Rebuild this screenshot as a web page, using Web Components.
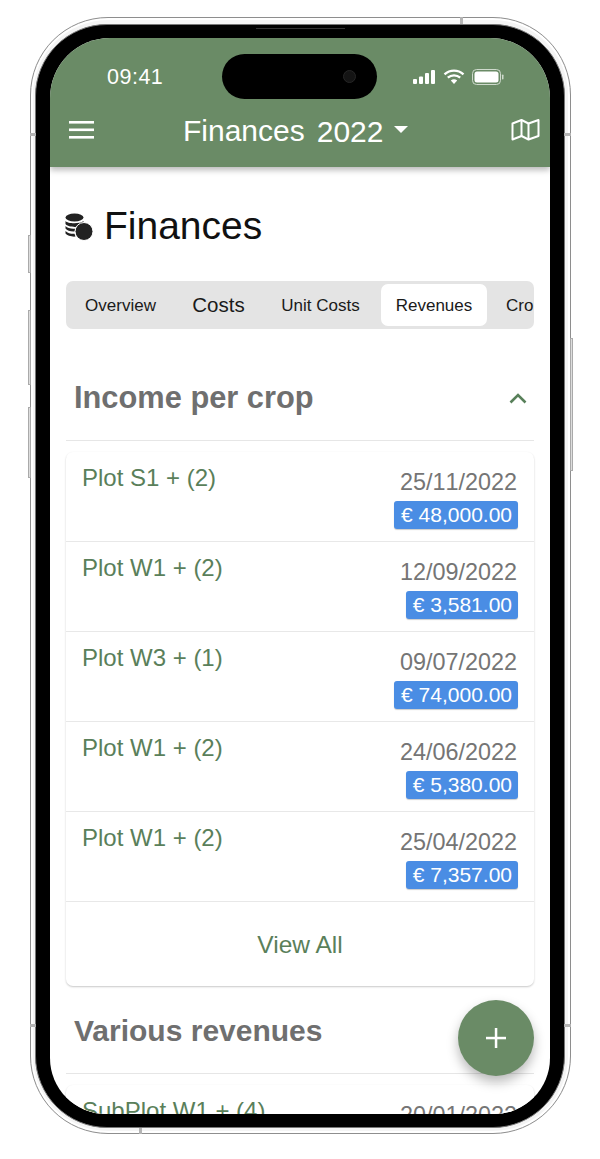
<!doctype html>
<html>
<head>
<meta charset="utf-8">
<style>
  html, body { margin: 0; padding: 0; background: #fff; }
  body { width: 600px; height: 1159px; overflow: hidden; font-family: "Liberation Sans", Arial, sans-serif; }
</style>
</head>
<body>

<template id="phone-frame">
  <style>
    :host { display: block; width: 541px; height: 1117px; margin: 17px 0 0 30px; position: relative; }
    .metal {
      box-sizing: border-box; width: 100%; height: 100%;
      border: 1px solid #8e8e8e; border-radius: 78px;
      background: #f4f4f4; padding: 6px 5px 5px 4px;
      box-shadow: inset 0 0 0 2px #fff;
    }
    .bezel {
      box-sizing: border-box; width: 100%; height: 100%;
      border: 1px solid #777; border-radius: 72px; background: #000;
      padding: 13px 14px 13px 14px;
    }
    .screen {
      height: 100%; background: #fff; border-radius: 60px 60px 56px 56px; overflow: hidden; position: relative;
      display: flex; flex-direction: column;
    }
    .btn { position: absolute; background: #ddd; border: 1px solid #aaa; box-sizing: border-box; width: 3px; }
    .band { position: absolute; background: #b4b4b4; }
    .island { position: absolute; left: 172px; top: 16px; width: 155px; height: 45px; border-radius: 23px; background: #000; z-index: 5; }
    .cam { position: absolute; right: 21px; top: 16px; width: 13px; height: 13px; border-radius: 50%; background: #141414; border: 1px solid #262626; box-sizing: border-box; }
    .speaker { position: absolute; left: 226px; top: 11px; width: 89px; height: 1px; background: #333; z-index: 2; }
  </style>
  <div class="btn" style="left:-2px;top:218px;height:38px"></div>
  <div class="btn" style="left:-2px;top:293px;height:75px"></div>
  <div class="btn" style="left:-2px;top:390px;height:71px"></div>
  <div class="btn" style="right:-2px;top:321px;height:133px"></div>
  <div class="band" style="left:0;top:116px;width:6px;height:3px"></div>
  <div class="band" style="right:0;top:116px;width:7px;height:3px"></div>
  <div class="band" style="left:0;top:1007px;width:6px;height:3px"></div>
  <div class="band" style="right:0;top:1007px;width:7px;height:3px"></div>
  <div class="band" style="left:430px;top:0;width:3px;height:7px"></div>
  <div class="band" style="left:109px;bottom:0;width:3px;height:6px"></div>
  <div class="speaker"></div>
  <div class="metal"><div class="bezel"><div class="screen">
    <div class="island"><div class="cam"></div></div>
    <slot></slot>
  </div></div></div>
</template>

<template id="app-bar">
  <style>
    :host { display: block; flex: none; position: relative; background: #6a8b66; color: #fff; height: 129px; box-shadow: 0 3px 6px rgba(0,0,0,.28); z-index: 2; }
    .status { display: flex; justify-content: space-between; align-items: center; height: 24px; padding: 27px 46px 0 57px; }
    .time { font-size: 21.500px; letter-spacing: .5px; }
    .icons { display: flex; align-items: center; gap: 7px; }
    .bar { display: flex; align-items: center; padding: 22px 10px 0 18px; height: 40px; }
    .menu { margin-bottom: 3px; }
    .map { margin-bottom: 4px; }
    .title { flex: 1; display: flex; align-items: center; font-size: 30px; margin-left: 88px; }
    .title b { font-weight: 400; margin-left: 12px; padding-top: 2px; }
    .caret { width: 0; height: 0; border: 7px solid transparent; border-top: 7px solid #fff; border-bottom: 0; margin: -3px 0 0 11px; }
  </style>
  <div class="status">
    <span class="time">09:41</span>
    <span class="icons">
      <svg width="23" height="16" viewBox="0 0 23 16" fill="#fff"><rect x="0" y="10" width="4" height="5" rx="1"/><rect x="6" y="7.500" width="4" height="7.500" rx="1"/><rect x="12" y="4" width="4" height="11" rx="1"/><rect x="18" y="1" width="4" height="14" rx="1"/></svg>
      <svg width="22" height="16" viewBox="0 0 22 16"><path d="M1.500 5.400C7 .4 15 .4 20.500 5.400" fill="none" stroke="#fff" stroke-width="2.300"/><path d="M4.800 8.700C8.300 5.500 13.700 5.500 17.200 8.700" fill="none" stroke="#fff" stroke-width="2.300"/><path d="M7.800 11.600C9.800 9.900 12.200 9.900 14.200 11.600L11 15Z" fill="#fff"/></svg>
      <svg width="32" height="16" viewBox="0 0 32 16"><rect x=".5" y=".5" width="28" height="15" rx="4" fill="none" stroke="#cfdacd"/><rect x="2.500" y="2.500" width="24" height="11" rx="2.500" fill="#fff"/><rect x="30" y="5.500" width="1.500" height="5" rx=".7" fill="#cfdacd"/></svg>
    </span>
  </div>
  <div class="bar">
    <svg class="menu" width="27" height="18" viewBox="0 0 27 18" fill="#fff"><rect x="1" y="0" width="25" height="2.600"/><rect x="1" y="7.500" width="25" height="2.600"/><rect x="1" y="15" width="25" height="2.600"/></svg>
    <div class="title"><span>Finances</span><b>2022</b><i class="caret"></i></div>
    <svg class="map" width="29" height="23" viewBox="0 0 29 23" fill="none" stroke="#fff" stroke-width="2" stroke-linejoin="round"><path d="M1.500 5.500L10.500 2L17.500 5.500L27.500 2V18L17.500 21.500L10.500 18L1.500 21.500Z"/><path d="M10.500 2V18M17.500 5.500V21.500"/></svg>
  </div>
</template>

<template id="page-title">
  <style>
    :host { display: flex; flex: none; align-items: center; gap: 11px; margin: 39px 0 0 15px; height: 40px; color: #111; font-size: 39px; }
    svg { margin-top: 2px; }
  </style>
  <svg width="28" height="28" viewBox="0 0 28 28" fill="#222">
    <ellipse cx="9.500" cy="4.500" rx="9" ry="4"/>
    <path d="M.5 8c2 3 15 3 18 0v3c-1 1-3 2-5 2.500-3 .8-11 .5-13-2.500Z"/>
    <path d="M.5 13c2 2.600 7 3 10.500 2.500l-1.500 3c-4 .2-7.500-.8-9-3Z"/>
    <path d="M.5 18c2 2.400 6 3 9 2.800l1 2.800c-4 .3-8.500-.8-10-3Z"/>
    <circle cx="19" cy="18.500" r="9" stroke="#fff" stroke-width="1"/>
  </svg>
  <slot></slot>
</template>

<template id="tab-strip">
  <style>
    :host { display: flex; flex: none; margin: 35px 16px 0; height: 48px; background: #e4e4e4; border-radius: 7px; overflow: hidden; align-items: center; }
  </style>
  <slot></slot>
</template>

<template id="tab-item">
  <style>
    :host { display: flex; flex: none; box-sizing: border-box; align-items: center; justify-content: center; height: 42px; padding-top: 2px; border-radius: 7px; font-size: 17px; color: #1a1a1a; }
    :host([active]) { background: #fff; }
  </style>
  <slot></slot>
</template>

<template id="section-head">
  <style>
    :host { display: flex; flex: none; justify-content: space-between; align-items: center; margin: 0 16px; height: 84px; border-bottom: 1px solid #e6e6e6; color: #6f6f6f; font-weight: 700; font-size: 30.800px; padding-left: 8px; }
    svg { margin-right: 7px; }
  </style>
  <slot></slot>
  <svg width="18" height="12" viewBox="0 0 18 12" fill="none" stroke="var(--chev, #58805a)" stroke-width="2.600"><path d="M1.500 10.500L9 3L16.500 10.500"/></svg>
</template>

<template id="income-card">
  <style>
    :host { display: block; flex: none; margin: 11px 16px 0; border-radius: 7px; background: #fff; box-shadow: 0 1px 2px rgba(0,0,0,.22); overflow: hidden; }
  </style>
  <slot></slot>
</template>

<template id="income-row">
  <style>
    :host { display: flex; justify-content: space-between; box-sizing: border-box; height: 90px; padding: 12px 16px 0; border-bottom: 1px solid #e8e8e8; }
    .name { color: #5a7f5a; font-size: 24px; }
    .right { display: flex; flex-direction: column; align-items: flex-end; padding-top: 5px; }
    .date { color: #757575; line-height: 27px; font-size: 23.400px; font-kerning: none; margin-right: 1px; }
    .amount { background: #4a8de4; color: #fff; border-radius: 3px; height: 28px; line-height: 28px; padding: 0 6px 0 7px; margin-top: 5px; font-size: 21px; font-kerning: none; box-shadow: 0 1px 1px rgba(0,0,0,.2); }
  </style>
  <div class="name"><slot name="name"></slot></div>
  <div class="right">
    <div class="date"><slot name="date"></slot></div>
    <div class="amount"><slot name="amount"></slot></div>
  </div>
</template>

<template id="card-footer">
  <style>
    :host { display: flex; box-sizing: border-box; height: 84px; padding-top: 2px; align-items: center; justify-content: center; color: #5a7f5a; font-size: 24.500px; }
  </style>
  <slot></slot>
</template>

<template id="fab-button">
  <style>
    :host { position: absolute; right: 16px; bottom: 38px; width: 76px; height: 76px; border-radius: 50%; background: #6a8b66; display: flex; align-items: center; justify-content: center; box-shadow: 0 6px 12px rgba(0,0,0,.28); z-index: 3; }
  </style>
  <svg width="20" height="20" viewBox="0 0 20 20" fill="#fff"><rect x="8.800" y="0" width="2.500" height="20"/><rect x="0" y="8.800" width="20" height="2.500"/></svg>
</template>

<script>
function defineFromTemplate(name) {
  customElements.define(name, class extends HTMLElement {
    constructor() {
      super();
      let template = document.getElementById(name);
      this.attachShadow({mode: 'open'}).appendChild(document.importNode(template.content, true));
    }
  });
}
['phone-frame', 'app-bar', 'page-title', 'tab-strip', 'tab-item', 'section-head', 'income-card', 'income-row', 'card-footer', 'fab-button'].forEach(defineFromTemplate);
</script>

<phone-frame>
  <app-bar></app-bar>
  <page-title>Finances</page-title>
  <tab-strip>
    <tab-item style="width:109px">Overview</tab-item>
    <tab-item style="width:87px;font-size:20.500px;padding-top:0">Costs</tab-item>
    <tab-item style="width:117px">Unit Costs</tab-item>
    <tab-item active style="width:106px;margin-left:2px">Revenues</tab-item>
    <tab-item style="margin-left:19px">Crops</tab-item>
  </tab-strip>
  <section-head style="margin-top:27px">Income per crop</section-head>
  <income-card>
    <income-row><span slot="name">Plot S1 + (2)</span><span slot="date">25/11/2022</span><span slot="amount">€ 48,000.00</span></income-row>
    <income-row><span slot="name">Plot W1 + (2)</span><span slot="date">12/09/2022</span><span slot="amount">€ 3,581.00</span></income-row>
    <income-row><span slot="name">Plot W3 + (1)</span><span slot="date">09/07/2022</span><span slot="amount">€ 74,000.00</span></income-row>
    <income-row><span slot="name">Plot W1 + (2)</span><span slot="date">24/06/2022</span><span slot="amount">€ 5,380.00</span></income-row>
    <income-row><span slot="name">Plot W1 + (2)</span><span slot="date">25/04/2022</span><span slot="amount">€ 7,357.00</span></income-row>
    <card-footer>View All</card-footer>
  </income-card>
  <section-head style="--chev:transparent;margin-top:3px;font-size:30px">Various revenues</section-head>
  <income-card>
    <income-row><span slot="name">SubPlot W1 + (4)</span><span slot="date">20/01/2022</span><span slot="amount">€ 1,200.00</span></income-row>
  </income-card>
  <fab-button></fab-button>
</phone-frame>

</body>
</html>
